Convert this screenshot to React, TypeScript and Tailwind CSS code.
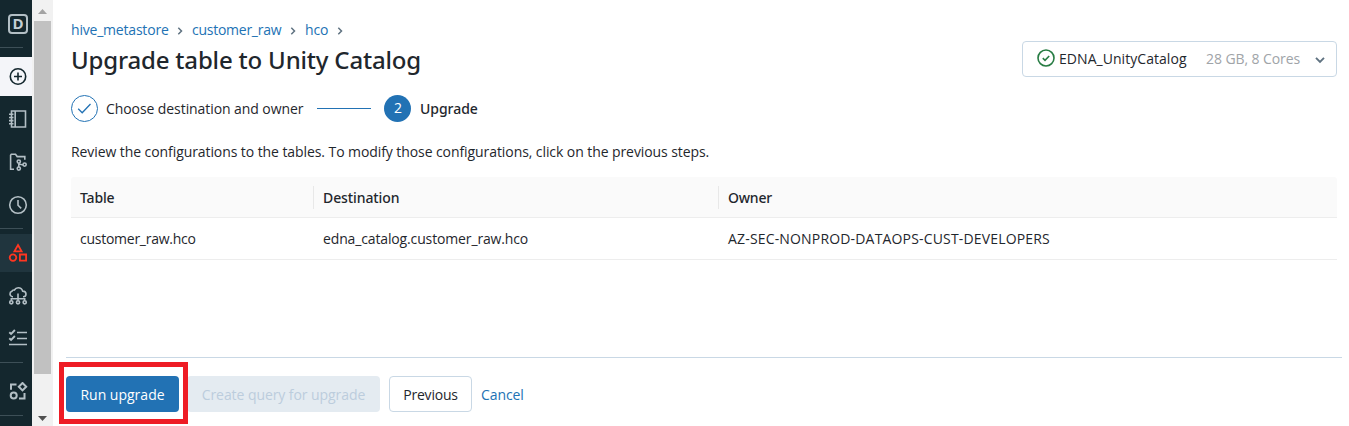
import type { ReactNode } from "react";

type IconProps = { children: ReactNode; className?: string };

function Icon({ children, className = "text-[#b3bfc5]" }: IconProps) {
  return (
    <svg
      width="20"
      height="20"
      viewBox="0 0 20 20"
      fill="none"
      stroke="currentColor"
      strokeWidth="1.6"
      className={`ml-2 shrink-0 ${className}`}
    >
      {children}
    </svg>
  );
}

function Divider() {
  return <div className="h-px w-[23px] shrink-0 bg-[#3d4f57]" />;
}

function Sidebar() {
  return (
    <nav className="flex h-full w-8 shrink-0 flex-col bg-[#14272e]">
      <div className="flex h-[47px] shrink-0 items-center">
        <div className="ml-2 flex h-5 w-5 items-center justify-center rounded-[4px] border-2 border-[#b3bfc5] font-['Open_Sans',sans-serif] text-[15px] leading-none font-bold text-[#c3ced4]">
          D
        </div>
      </div>
      <Divider />
      <div className="mt-[9px] flex h-[39px] shrink-0 items-center bg-[#f4f5f9]">
        <Icon className="text-[#14272e]">
          <circle cx="10" cy="9.5" r="7.7" />
          <path d="M10 5.500v8M6 9.500h8" />
        </Icon>
      </div>
      <div className="flex h-[46px] shrink-0 items-center">
        <Icon>
          <path d="M3.500 2h14v16h-14zM7.200 2v16M1 5.300h4.500M1 8.500h4.500M1 11.600h4.500M1 14.800h4.500" />
        </Icon>
      </div>
      <div className="flex h-10 shrink-0 items-center">
        <Icon>
          <path d="M6 17.300H2.600V3.200l.7-.9h4.200l1.700 2.300h7.600v3.200" />
          <circle cx="10.800" cy="9.600" r="1.600" />
          <circle cx="10.800" cy="16.600" r="1.600" />
          <circle cx="16.600" cy="12.600" r="1.600" />
          <path d="M10.800 11.200V15M11 11.400c.6 1.300 2 1.400 4 1.300" />
        </Icon>
      </div>
      <div className="flex h-[46px] shrink-0 items-center">
        <Icon>
          <circle cx="10" cy="10" r="8.300" />
          <path d="M10 5v5.200l3.200 3.200" />
        </Icon>
      </div>
      <Divider />
      <div className="mt-[5px] flex h-[38px] shrink-0 items-center bg-[#20353e]">
        <Icon className="text-[#ff3621]">
          <g strokeWidth="1.800">
            <path d="M10 2l3.600 6.300H6.400z" />
            <circle cx="5" cy="14.600" r="3.300" />
            <path d="M11.900 11.500h6.200v6.200h-6.200z" />
          </g>
        </Icon>
      </div>
      <div className="flex h-12 shrink-0 items-center">
        <Icon>
          <path d="M5 10.700H4.200a2.800 2.800 0 0 1-.3-5.400C4.300 4.200 5.300 3.800 6.400 4c1-1.700 2.300-2.200 3.800-2.200 2.400 0 3.900 1.300 4.400 3.300 2.200.1 3.400 1.300 3.400 2.900 0 1.600-1.200 2.700-2.700 2.700H15" />
          <path d="M10 7.500v7M3.300 14.500v-1.800h13.400v1.800" />
          <circle cx="3.300" cy="16.300" r="1.600" />
          <circle cx="10" cy="16.300" r="1.600" />
          <circle cx="16.700" cy="16.300" r="1.600" />
        </Icon>
      </div>
      <div className="flex h-[36px] shrink-0 items-center">
        <Icon>
          <path d="M9 4.500h10M9 10.500h10M1 16.500h18" />
          <path d="M1.300 4.200l1.800 1.700L6.900 2M1.300 10.200l1.800 1.700L6.900 8" strokeWidth="1.900" />
        </Icon>
      </div>
      <div className="h-1.5 shrink-0" />
      <Divider />
      <div className="flex h-[52px] shrink-0 items-center pt-[5px]">
        <Icon>
          <g strokeWidth="2">
            <path d="M3 7.700V2.500h5.500M14.500 1l3.700 3.700-3.700 3.700-3.700-3.700zM16.500 11v5.500H11" />
            <circle cx="5.700" cy="13.500" r="3" />
          </g>
        </Icon>
      </div>
      <Divider />
    </nav>
  );
}

function Scrollbar() {
  return (
    <div className="flex h-full w-[21px] shrink-0 flex-col bg-[#f1f1f1] pl-0.5">
      <svg width="17" height="21" viewBox="0 0 17 21" fill="#a3a3a3" className="shrink-0">
        <path d="M4 14l4.500-5 4.500 5z" />
      </svg>
      <div className="h-[353px] w-[17px] shrink-0 bg-[#c1c1c1]" />
      <svg width="17" height="52" viewBox="0 0 17 52" fill="#505050" className="shrink-0">
        <path d="M4 42l4.500 5 4.500-5z" />
      </svg>
    </div>
  );
}

function Crumb({ children }: { children: ReactNode }) {
  return <a className="text-[#2272b4]">{children}</a>;
}

function Arrow({ className }: { className: string }) {
  return (
    <svg
      width="6"
      height="8"
      viewBox="0 0 6 8"
      fill="none"
      stroke="#5f7281"
      strokeWidth="1.500"
      className={`mt-px shrink-0 ${className}`}
    >
      <path d="M1.300 .8L4.500 4 1.300 7.200" />
    </svg>
  );
}

function HeaderCell({ children, divided }: { children: ReactNode; divided?: boolean }) {
  return (
    <div className="flex items-center font-['Noto_Sans',sans-serif] font-medium">
      {divided && <div className="-ml-px h-[23px] w-px bg-[#e8e8e8]" />}
      <div className={divided ? "pt-0.5 pl-[9px]" : "pt-0.5 pl-[9px]"}>{children}</div>
    </div>
  );
}

export default function App() {
  return (
    <div className="flex h-[426px] w-[1349px] overflow-hidden bg-white font-['Open_Sans','Noto_Sans',sans-serif] text-[14px] leading-5 whitespace-nowrap text-[#1f272d]">
      <Sidebar />
      <Scrollbar />
      <main className="relative flex min-w-0 flex-1 flex-col">
        <div className="flex h-[94px] shrink-0 justify-between pr-3 pl-[18px]">
          <div className="pt-5">
            <div className="flex items-center">
              <div className="w-[98px] tracking-[-0.2px]">
                <Crumb>hive_metastore</Crumb>
              </div>
              <Arrow className="mr-[9px] ml-2" />
              <div className="w-[90px] tracking-[-0.26px]">
                <Crumb>customer_raw</Crumb>
              </div>
              <Arrow className="mr-[9px] ml-2" />
              <div className="w-6 tracking-[-0.1px]">
                <Crumb>hco</Crumb>
              </div>
              <Arrow className="ml-2" />
            </div>
            <h1 className="mt-1 font-['Noto_Sans',sans-serif] text-[24px] leading-8 font-medium tracking-[-0.18px]">
              Upgrade table to Unity Catalog
            </h1>
          </div>
          <button className="mt-[41px] flex h-9 w-[315px] items-center rounded-[4px] border border-[#c9d8e5] pl-[14px]">
            <svg
              width="18"
              height="18"
              viewBox="0 0 18 18"
              fill="none"
              stroke="#277c43"
              strokeWidth="1.600"
              className="mb-[3px] shrink-0"
            >
              <circle cx="9" cy="9" r="8" />
              <path d="M5.800 9.200l2.200 2.100 4.200-4.300" />
            </svg>
            <span className="ml-1 w-[147px] text-left tracking-[0.05px]">EDNA_UnityCatalog</span>
            <span className="w-[94px] text-left tracking-[-0.09px] text-[#a0a4a8]">28 GB, 8 Cores</span>
            <svg
              width="10"
              height="8"
              viewBox="0 0 10 8"
              fill="none"
              stroke="#5f7281"
              strokeWidth="1.900"
              className="mt-px ml-[15px] shrink-0"
            >
              <path d="M1 1.800l4 4 4-4" />
            </svg>
          </button>
        </div>

        <div className="mt-px flex h-[27px] shrink-0 items-center pl-[18px]">
          <svg width="27" height="27" viewBox="0 0 27 27" fill="none" stroke="#2272b4" className="shrink-0">
            <circle cx="13.500" cy="13.500" r="13" />
            <path d="M7.200 13.700l4 4L19.500 9" strokeWidth="1.300" />
          </svg>
          <span className="ml-2 w-[211px] tracking-[-0.08px]">Choose destination and owner</span>
          <div className="h-px w-[54px] bg-[#2272b4]" />
          <div className="ml-[13px] flex h-[27px] w-[27px] items-center justify-center rounded-full bg-[#2272b4] pb-px pl-px text-[14px] text-white">
            2
          </div>
          <span className="ml-[9px] font-['Noto_Sans',sans-serif] font-medium tracking-[-0.04px]">Upgrade</span>
        </div>

        <p className="mt-5 h-[35px] shrink-0 pl-[18px] tracking-[-0.08px]">
          Review the configurations to the tables. To modify those configurations, click on the previous steps.
        </p>

        <div className="mr-3 ml-[18px] flex shrink-0 flex-col">
          <div className="grid h-[41px] grid-cols-[243px_405px_1fr] rounded-t-[3px] border-b border-[#ededed] bg-[#fafafa]">
            <HeaderCell>
              <span className="tracking-[-0.15px]">Table</span>
            </HeaderCell>
            <HeaderCell divided>
              <span className="tracking-[-0.1px]">Destination</span>
            </HeaderCell>
            <HeaderCell divided>
              <span className="tracking-[-0.2px]">Owner</span>
            </HeaderCell>
          </div>
          <div className="grid h-[42px] grid-cols-[243px_405px_1fr] items-center border-b border-[#ededed]">
            <span className="pl-[9px] tracking-[-0.26px]">customer_raw.hco</span>
            <span className="pl-[9px] tracking-[-0.14px]">edna_catalog.customer_raw.hco</span>
            <span className="pl-[9px] tracking-[0.17px]">AZ-SEC-NONPROD-DATAOPS-CUST-DEVELOPERS</span>
          </div>
        </div>

        <footer className="mt-[97px] mr-[7px] ml-[13px] flex h-[69px] shrink-0 items-start border-t border-[#c9d8e5] pt-[18px]">
          <button className="h-9 w-[113px] rounded-[4px] bg-[#2272b4] pt-0.5 text-white">Run upgrade</button>
          <button className="ml-2 h-9 w-[193px] rounded-[4px] bg-[#e4ebf1] pt-0.5 tracking-[-0.07px] text-[#bccddd]">
            Create query for upgrade
          </button>
          <button className="ml-[9px] h-9 w-[83px] rounded-[4px] border border-[#c9d8e5] pt-0.5 tracking-[-0.21px]">
            Previous
          </button>
          <a className="ml-[9px] pt-px leading-9 tracking-[-0.1px] text-[#2272b4]">Cancel</a>
        </footer>

        <div className="pointer-events-none absolute top-[362px] left-[6px] h-[62px] w-[129px] border-5 border-[#ee1c25]" />
      </main>
    </div>
  );
}
